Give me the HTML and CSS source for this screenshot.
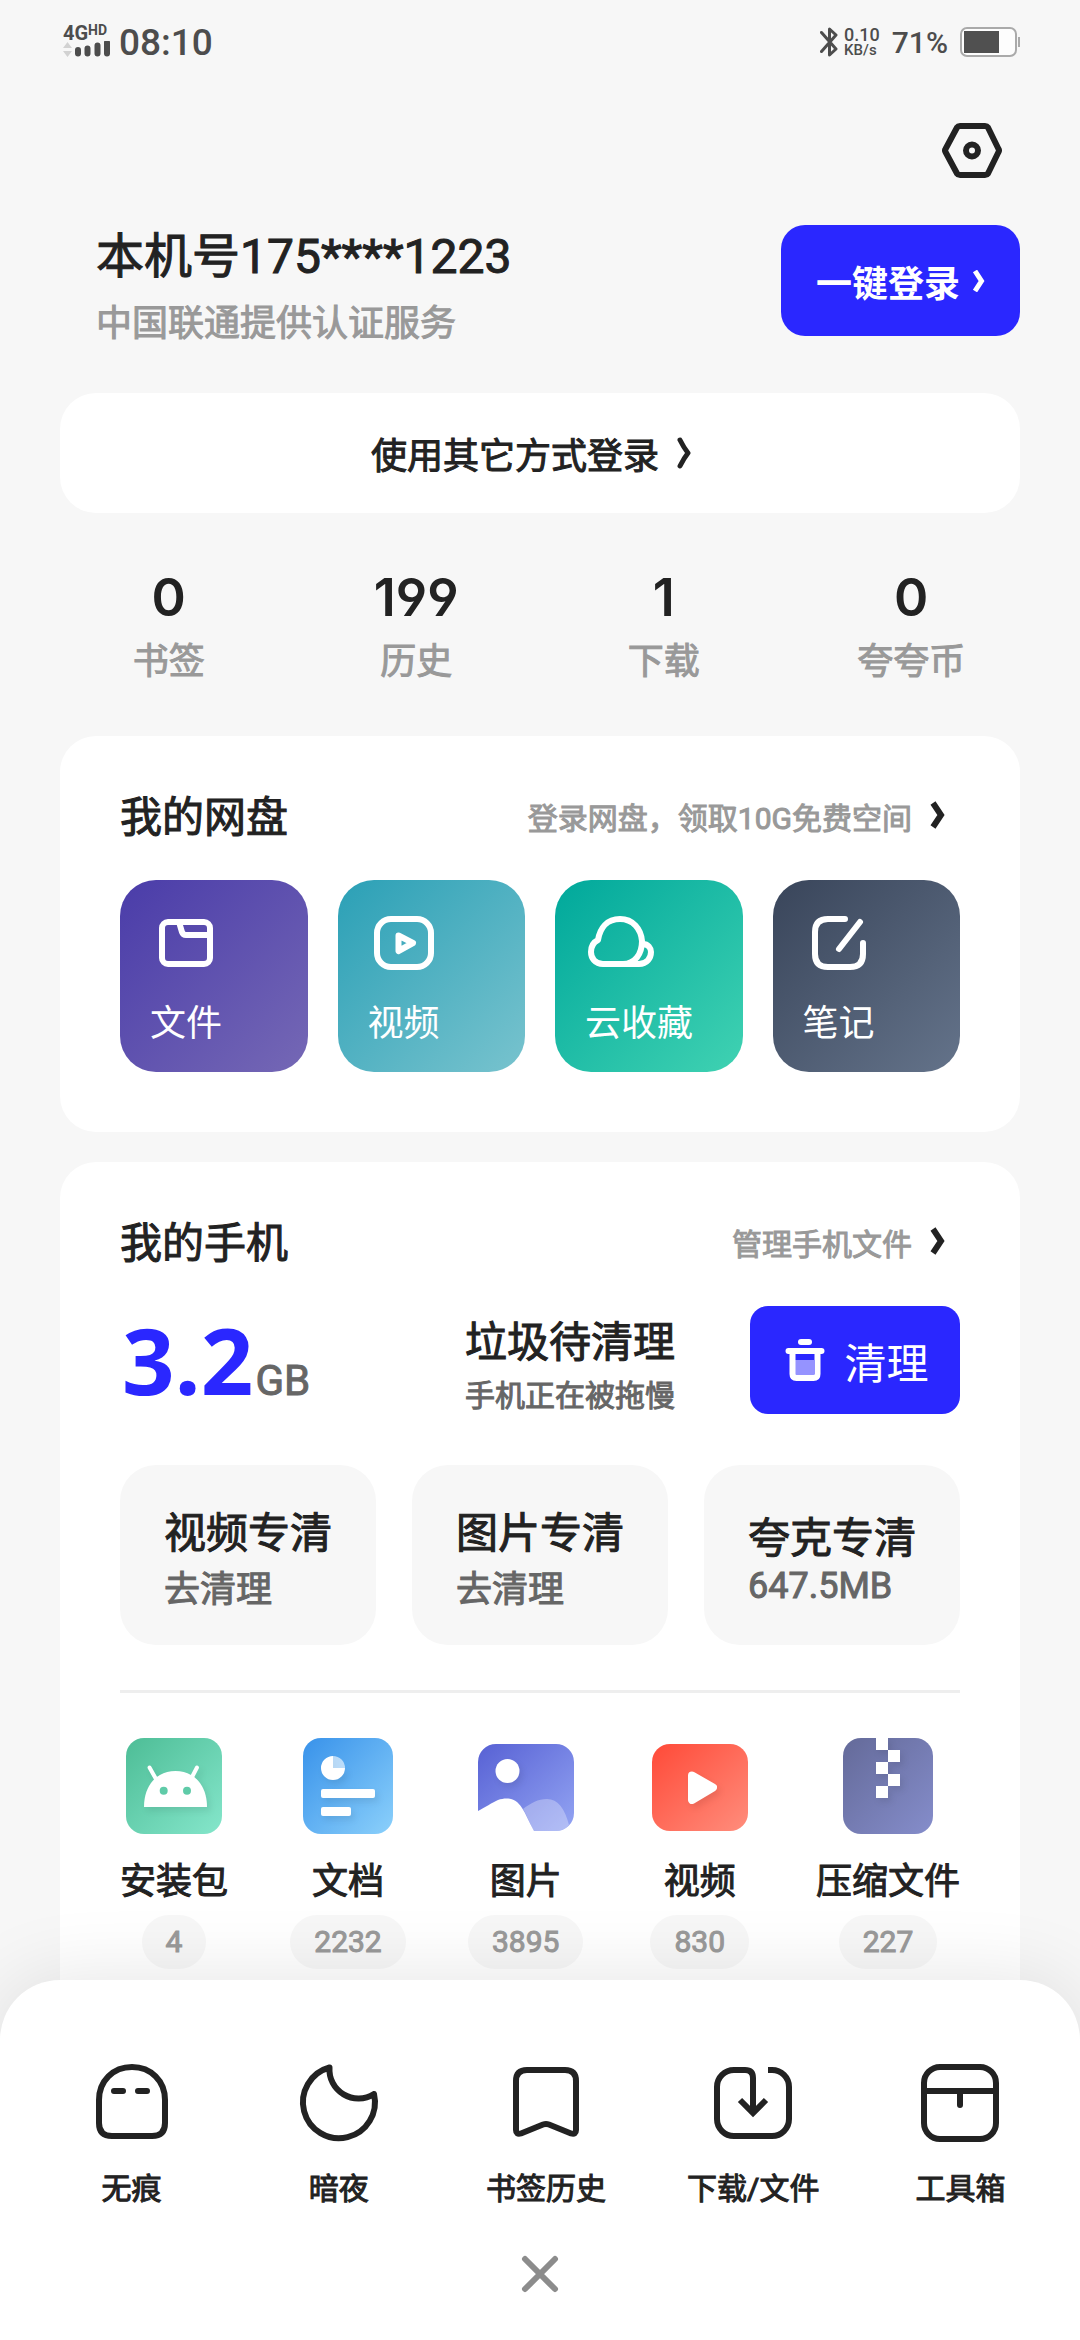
FILE: index.html
```html
<!DOCTYPE html>
<html lang="zh-CN">
<head>
<meta charset="utf-8">
<meta name="viewport" content="width=device-width, initial-scale=1">
<title>我的</title>
<link rel="stylesheet" href="styles.css">
</head>
<body>
<div class="app">
  <main class="content">
    <div class="status">
      <div class="signal">
        <div class="signal-type"><span>4G</span><span class="signal-hd">HD</span></div>
        <svg width="48" height="18" viewBox="0 0 48 18" aria-hidden="true">
          <path d="M0 7L4.500 1L9 7ZM0 10L4.500 16L9 10Z" fill="#d2d2d2"/>
          <path d="M15 9V12.500M24.500 7.500V12.500M34.500 4.500V12.500M44 1.500V12.500" stroke="#4d4d4d" stroke-width="6" stroke-linecap="round"/>
        </svg>
      </div>
      <time class="clock">08:10</time>
      <div class="status-right">
        <svg width="18" height="30" viewBox="0 0 18 30" fill="none" stroke="#4d4d4d" stroke-width="3" stroke-linecap="round" stroke-linejoin="round" aria-hidden="true">
          <path d="M1.500 5.500L16 22L9.500 28V2L16 8L1.500 24.500"/>
        </svg>
        <div class="speed"><span class="speed-value">0.10</span><span class="speed-unit">KB/s</span></div>
        <span class="percent">71%</span>
        <svg width="60" height="30" viewBox="0 0 60 30" aria-hidden="true">
          <rect x="1" y="1" width="55" height="28" rx="6" fill="#fdfdfd" stroke="#aaa" stroke-width="2"/>
          <rect x="4" y="4" width="35" height="22" fill="#505050"/>
          <rect x="58" y="10" width="2" height="10" fill="#aaa"/>
        </svg>
      </div>
    </div>

    <div class="toolbar">
      <button class="icon-button" type="button" aria-label="设置">
        <svg width="72" height="72" viewBox="0 0 72 72" fill="none" stroke="#222" stroke-width="6" stroke-linejoin="round">
          <path d="M21 12.500Q22 11 24 11H49Q51 11 52 12.500L62.500 34Q63.500 35.500 62.500 37L52 58.500Q51 60 49 60H24Q22 60 21 58.500L9.500 37Q8.500 35.500 9.500 34Z"/>
          <circle cx="36" cy="35.500" r="6"/>
        </svg>
      </button>
    </div>

    <section class="profile">
      <div class="profile-text">
        <h1 class="profile-name">本机号175****1223</h1>
        <p class="profile-note">中国联通提供认证服务</p>
      </div>
      <button class="login" type="button">
        <span>一键登录</span>
        <svg width="13" height="22" viewBox="0 0 13 22" fill="none" stroke="#fff" stroke-width="5"><path d="M3 1L9.500 11L3 21"/></svg>
      </button>
    </section>

    <button class="other-login" type="button">
      <span>使用其它方式登录</span>
      <svg width="36" height="32" viewBox="0 0 36 32" fill="none" stroke="#222" stroke-width="5" stroke-linecap="round" stroke-linejoin="round"><path d="M7 3Q11 11 15 16Q11 21 7 29"/></svg>
    </button>

    <ul class="stats">
      <li class="stat"><span class="stat-value">0</span><span class="stat-label">书签</span></li>
      <li class="stat"><span class="stat-value">199</span><span class="stat-label">历史</span></li>
      <li class="stat"><span class="stat-value">1</span><span class="stat-label">下载</span></li>
      <li class="stat"><span class="stat-value">0</span><span class="stat-label">夸夸币</span></li>
    </ul>

    <section class="card">
      <div class="card-head">
        <h2 class="card-title">我的网盘</h2>
        <a class="card-link" href="#drive">登录网盘，领取10G免费空间
          <svg class="chevron" width="16" height="28" viewBox="0 0 16 28" fill="none" stroke="#222" stroke-width="6"><path d="M3 2L11 14L3 26"/></svg>
        </a>
      </div>
      <div class="tiles">
        <button class="tile tile-file" type="button">
          <svg width="72" height="72" viewBox="0 0 72 72" fill="none" stroke="#fff" stroke-width="6"><rect x="12" y="15" width="48" height="42" rx="6"/><path d="M29 15L32 25Q33 28 36 28H60"/></svg>
          <span class="tile-label">文件</span>
        </button>
        <button class="tile tile-video" type="button">
          <svg width="72" height="72" viewBox="0 0 72 72" fill="none" stroke="#fff" stroke-width="6" stroke-linejoin="round"><rect x="9" y="12" width="54" height="48" rx="14"/><path d="M30.500 28.500L45 36L30.500 44Z"/></svg>
          <span class="tile-label">视频</span>
        </button>
        <button class="tile tile-cloud" type="button">
          <svg width="72" height="72" viewBox="0 0 72 72" fill="none" stroke="#fff" stroke-width="6" stroke-linejoin="round"><path d="M18 57C10 57 6 51 6 45C6 39 9 35 13 33C15 21 22 12 35 12C48 12 56 22 57 34C57 47 50 57 38 57ZM58 37C63 37 66 41 66 45C66 51 62 57 54 57H38"/></svg>
          <span class="tile-label">云收藏</span>
        </button>
        <button class="tile tile-note" type="button">
          <svg width="72" height="72" viewBox="0 0 72 72" fill="none" stroke="#fff" stroke-width="6" stroke-linecap="round"><path d="M42 12H25Q12 12 12 25V47Q12 60 25 60H47Q60 60 60 47V36M57 15L36 42"/></svg>
          <span class="tile-label">笔记</span>
        </button>
      </div>
    </section>

    <section class="card">
      <div class="card-head">
        <h2 class="card-title">我的手机</h2>
        <a class="card-link" href="#phone">管理手机文件
          <svg class="chevron" width="16" height="28" viewBox="0 0 16 28" fill="none" stroke="#222" stroke-width="6"><path d="M3 2L11 14L3 26"/></svg>
        </a>
      </div>
      <div class="junk">
        <p class="junk-size"><span class="junk-number">3.2</span><span class="junk-unit">GB</span></p>
        <div class="junk-text">
          <p class="junk-title">垃圾待清理</p>
          <p class="junk-note">手机正在被拖慢</p>
        </div>
        <button class="clean" type="button">
          <svg width="48" height="48" viewBox="0 0 48 48" fill="none">
            <rect x="17" y="3" width="14" height="6" rx="3" fill="#fff"/>
            <rect x="14" y="24" width="19" height="16" fill="#fff" opacity=".5"/>
            <path d="M7.500 15H40.500M11.500 15V38Q11.500 42 15.500 42H32.500Q36.500 42 36.500 38V15" stroke="#fff" stroke-width="6" stroke-linecap="round"/>
          </svg>
          <span>清理</span>
        </button>
      </div>
      <div class="cleaners">
        <button class="cleaner" type="button"><span class="cleaner-title">视频专清</span><span class="cleaner-note">去清理</span></button>
        <button class="cleaner" type="button"><span class="cleaner-title">图片专清</span><span class="cleaner-note">去清理</span></button>
        <button class="cleaner" type="button"><span class="cleaner-title">夸克专清</span><span class="cleaner-note">647.5MB</span></button>
      </div>
      <div class="files">
        <a class="file" href="#apk">
          <svg width="96" height="96" viewBox="0 0 96 96">
            <defs><linearGradient id="apk" x1="0" y1="0" x2="1" y2="1"><stop offset="0" stop-color="#4dbd96"/><stop offset="1" stop-color="#85e6cb"/></linearGradient></defs>
            <rect width="96" height="96" rx="18" fill="url(#apk)"/>
            <g class="glyph"><path d="M18 69C18 47 31 33 49.500 33S81 47 81 69Z" fill="#fff"/><path d="M23.500 29.500L30 41M71 29.500L65 41" stroke="#fff" stroke-width="4" stroke-linecap="round"/></g>
            <circle cx="37.700" cy="52.700" r="4" fill="#5fcba8"/><circle cx="61" cy="52.700" r="4" fill="#5fcba8"/>
          </svg>
          <span class="file-label">安装包</span><span class="file-count">4</span>
        </a>
        <a class="file" href="#doc">
          <svg width="90" height="96" viewBox="0 0 90 96">
            <defs><linearGradient id="doc" x1="0" y1="0" x2="1" y2="1"><stop offset="0" stop-color="#3892ea"/><stop offset="1" stop-color="#8bd0fb"/></linearGradient></defs>
            <rect width="90" height="96" rx="18" fill="url(#doc)"/>
            <g class="glyph" fill="#fff"><path d="M30 30V18A12 12 0 1 0 42 30Z"/><rect x="18" y="51" width="54" height="9" rx="2"/><rect x="18" y="69" width="30" height="9" rx="2"/></g>
            <path d="M30 30V18A12 12 0 0 1 42 30Z" fill="#fff" opacity=".6"/>
          </svg>
          <span class="file-label">文档</span><span class="file-count">2232</span>
        </a>
        <a class="file" href="#pic">
          <svg width="96" height="96" viewBox="0 0 96 96">
            <defs><linearGradient id="pic" x1="0" y1="0" x2="1" y2="1"><stop offset="0" stop-color="#5761d4"/><stop offset="1" stop-color="#93a4f3"/></linearGradient></defs>
            <path d="M18 6H78A18 18 0 0 1 96 24V75A18 18 0 0 1 78 93H56C51 84 48 76 44 70C38 60 29 59 20 62C15 64 6 70 0 73V24A18 18 0 0 1 18 6Z" fill="url(#pic)"/>
            <path d="M45 71C53 65 60 61 69 61C80 61 87 71 91 87A18 18 0 0 1 78 93H56C51 84 49 77 45 71Z" fill="#fff" opacity=".3"/>
            <circle class="glyph" cx="29.500" cy="33" r="12" fill="#fff"/>
          </svg>
          <span class="file-label">图片</span><span class="file-count">3895</span>
        </a>
        <a class="file" href="#video">
          <svg width="96" height="96" viewBox="0 0 96 96">
            <defs><linearGradient id="vid" x1="0" y1="0" x2="1" y2="1"><stop offset="0" stop-color="#ff4a38"/><stop offset="1" stop-color="#ff8d7c"/></linearGradient></defs>
            <rect y="6" width="96" height="87" rx="18" fill="url(#vid)"/>
            <path class="glyph" d="M40 37.500L61 49.500L40 62Z" fill="#fff" stroke="#fff" stroke-width="8" stroke-linejoin="round"/>
          </svg>
          <span class="file-label">视频</span><span class="file-count">830</span>
        </a>
        <a class="file" href="#zip">
          <svg width="90" height="96" viewBox="0 0 90 96">
            <defs><linearGradient id="zip" x1="0" y1="0" x2="1" y2="1"><stop offset="0" stop-color="#646a99"/><stop offset="1" stop-color="#858dcb"/></linearGradient></defs>
            <rect width="90" height="96" rx="18" fill="url(#zip)"/>
            <path class="glyph" d="M33 0H45V12H57V24H45V36H57V48H45V60H33V48H45V36H33V24H45V12H33Z" fill="#fff"/>
          </svg>
          <span class="file-label">压缩文件</span><span class="file-count">227</span>
        </a>
      </div>
    </section>
  </main>

  <nav class="sheet">
    <div class="sheet-items">
      <button class="sheet-item" type="button">
        <svg width="96" height="96" viewBox="0 0 96 96" fill="none" stroke="#222" stroke-width="6" stroke-linecap="round"><path d="M15 45C15 26 29 12 48 12S81 26 81 45V68Q81 81 68 81H28Q15 81 15 68ZM30 36H39M54 36H63"/></svg>
        <span>无痕</span>
      </button>
      <button class="sheet-item" type="button">
        <svg width="96" height="96" viewBox="0 0 96 96" fill="none" stroke="#222" stroke-width="6" stroke-linejoin="round"><path d="M38.500 12.500A36 36 0 1 0 83 39A29 29 0 0 1 38.500 12.500Z"/></svg>
        <span>暗夜</span>
      </button>
      <button class="sheet-item" type="button">
        <svg width="96" height="96" viewBox="0 0 96 96" fill="none" stroke="#222" stroke-width="6"><path d="M18 26Q18 15 29 15H67Q78 15 78 26V75Q78 80 73 78.500L51 69.500Q48 68.500 45 69.500L23 78.500Q18 80 18 75Z"/></svg>
        <span>书签历史</span>
      </button>
      <button class="sheet-item" type="button">
        <svg width="96" height="96" viewBox="0 0 96 96" fill="none" stroke="#222" stroke-width="6"><path d="M63 15H67A17 17 0 0 1 84 32V64A17 17 0 0 1 67 81H29A17 17 0 0 1 12 64V32A17 17 0 0 1 29 15H40Q48 15 48 23V58M35 45L48 58L61 45"/></svg>
        <span>下载/文件</span>
      </button>
      <button class="sheet-item" type="button">
        <svg width="96" height="96" viewBox="0 0 96 96" fill="none" stroke="#222" stroke-width="6" stroke-linecap="round"><rect x="12" y="12" width="72" height="72" rx="16"/><path d="M12 36H84M48 36V50"/></svg>
        <span>工具箱</span>
      </button>
    </div>
    <button class="icon-button close" type="button" aria-label="关闭">
      <svg width="48" height="48" viewBox="0 0 48 48" stroke="#8c8c8c" stroke-width="6" stroke-linecap="round"><path d="M9 9L39 39M39 9L9 39"/></svg>
    </button>
  </nav>
</div>
</body>
</html>
```

FILE: styles.css
```css
* {
  box-sizing: border-box;
}

body,
h1,
h2,
p,
ul {
  margin: 0;
  padding: 0;
}

/* Labels are set in the regular weight, thickened by a thin outline */
body {
  background: #f7f7f7;
  color: #222;
  font-family: Roboto, "Noto Sans CJK SC", sans-serif;
  font-weight: 400;
  -webkit-text-stroke-width: 1px;
}

button {
  margin: 0;
  padding: 0;
  border: 0;
  background: none;
  color: inherit;
  font: inherit;
}

a {
  color: inherit;
  text-decoration: none;
}

svg {
  display: block;
  flex: none;
}

.app {
  display: flex;
  flex-direction: column;
  height: 100vh;
}

.content {
  flex: 1;
  min-height: 0;
  overflow-y: auto;
  padding: 0 60px 90px;
  scrollbar-width: none;
}

/* Status bar */
.status {
  display: flex;
  align-items: center;
  height: 84px;
  padding-left: 3px;
  color: #4d4d4d;
  font-weight: 500;
  -webkit-text-stroke-width: 0;
}

.signal {
  width: 48px;
}

.signal-type {
  display: flex;
  align-items: flex-start;
  font-size: 20px;
  font-weight: 700;
  line-height: 16px;
}

.signal-hd {
  font-size: 14px;
  line-height: 11px;
}

.clock {
  flex: 1;
  margin-left: 8px;
  font-size: 37px;
}

.status-right {
  display: flex;
  align-items: center;
}

.speed {
  display: flex;
  flex-direction: column;
  margin: 0 12px 0 6px;
}

.speed-value {
  font-size: 18px;
  line-height: 17px;
}

.speed-unit {
  font-size: 15px;
  line-height: 15px;
}

.percent {
  margin-right: 12px;
  font-size: 30px;
}

.toolbar {
  display: flex;
  justify-content: flex-end;
  padding: 31px 12px 38px;
}

/* Account */
.profile {
  display: flex;
  align-items: flex-start;
  justify-content: space-between;
  margin-bottom: 45px;
}

.profile-text {
  padding: 2px 0 0 36px;
}

.profile-name {
  font-size: 48px;
  font-weight: 400;
  line-height: 60px;
}

.profile-note {
  margin-top: 13px;
  color: #999;
  font-size: 36px;
  line-height: 48px;
}

.login {
  display: flex;
  align-items: center;
  gap: 12px;
  height: 111px;
  padding: 0 35px;
  border-radius: 24px;
  background: #2a27ff;
  color: #fff;
  font-size: 36px;
  font-weight: 700;
  -webkit-text-stroke-width: 0;
}

.other-login {
  display: flex;
  align-items: center;
  justify-content: center;
  gap: 14px;
  width: 100%;
  height: 120px;
  border-radius: 36px;
  background: #fff;
  font-size: 36px;
}

.stats {
  display: grid;
  grid-template-columns: repeat(4, 1fr);
  margin: 0 -15px;
  padding: 55px 0 50px;
  list-style: none;
  text-align: center;
}

.stat {
  display: flex;
  flex-direction: column;
  gap: 10px;
}

.stat-value {
  font-family: Inter, Roboto, sans-serif;
  font-feature-settings: "cv04";
  font-size: 52px;
  font-weight: 600;
  line-height: 60px;
  -webkit-text-stroke-width: 0;
}

.stat-label {
  color: #999;
  font-size: 36px;
  line-height: 48px;
}

/* Cards */
.card {
  margin-bottom: 30px;
  padding: 52px 60px 60px;
  border-radius: 36px;
  background: #fff;
}

.card-head {
  display: flex;
  align-items: center;
  justify-content: space-between;
  margin-bottom: 32px;
}

.card-title {
  font-size: 42px;
  font-weight: 400;
  line-height: 60px;
}

.card-link {
  display: flex;
  align-items: center;
  gap: 18px;
  padding: 2px 14px 0 0;
  color: #999;
  font-size: 30px;
  line-height: 58px;
}

.chevron {
  margin-bottom: 8px;
}

.tiles {
  display: grid;
  grid-template-columns: repeat(4, 1fr);
  gap: 30px;
}

.tile {
  display: flex;
  flex-direction: column;
  align-items: flex-start;
  gap: 21px;
  padding: 27px 30px 24px;
  border-radius: 36px;
  color: #fff;
  -webkit-text-stroke-width: 0;
}

.tile-label {
  font-size: 36px;
  line-height: 48px;
}

.tile-file {
  background: linear-gradient(135deg, #4a3ca9, #7568b5);
}

.tile-video {
  background: linear-gradient(135deg, #2ba0b6, #78c3ce);
}

.tile-cloud {
  background: linear-gradient(135deg, #00a89b, #40d2b2);
}

.tile-note {
  background: linear-gradient(135deg, #39455a, #64738a);
}

/* Storage clean-up */
.junk {
  display: flex;
  align-items: flex-end;
  margin-bottom: 51px;
}

.junk-size {
  display: flex;
  flex: 1;
  align-items: baseline;
  gap: 2px;
  padding-left: 2px;
}

.junk-number {
  color: #2a27ff;
  font-family: "Open Sans", sans-serif;
  font-size: 92px;
  font-weight: 700;
  line-height: 108px;
  -webkit-text-stroke-width: 0;
}

.junk-unit {
  color: #666;
  font-size: 42px;
  line-height: 48px;
}

.junk-text {
  margin-right: 75px;
}

.junk-title {
  font-size: 42px;
  line-height: 54px;
}

.junk-note {
  margin-top: 8px;
  color: #666;
  font-size: 30px;
  line-height: 36px;
}

.clean {
  display: flex;
  align-items: center;
  justify-content: center;
  gap: 15px;
  width: 210px;
  height: 108px;
  border-radius: 18px;
  background: #2a27ff;
  color: #fff;
  font-size: 42px;
  -webkit-text-stroke-width: 0;
}

.cleaners {
  display: grid;
  grid-template-columns: repeat(3, 1fr);
  gap: 36px;
}

.cleaner {
  display: flex;
  flex-direction: column;
  align-items: flex-start;
  justify-content: center;
  height: 180px;
  padding-left: 44px;
  border-radius: 36px;
  background: #f7f7f7;
}

.cleaner-title {
  font-size: 42px;
}

.cleaner-note {
  color: #666;
  font-size: 36px;
}

.files {
  display: flex;
  justify-content: space-between;
  margin-top: 45px;
  padding-top: 45px;
  border-top: 3px solid #eee;
}

.file {
  display: flex;
  flex-direction: column;
  align-items: center;
  min-width: 108px;
}

.glyph {
  filter: drop-shadow(3px 4px 3px rgba(0, 0, 0, 0.08));
}

.file-label {
  margin: 24px 0 9px;
  font-size: 36px;
  line-height: 48px;
}

.file-count {
  padding: 0 24px;
  border-radius: 27px;
  background: #f7f7f7;
  color: #999;
  font-size: 30px;
  line-height: 54px;
}

/* Bottom sheet, its rounded top overlapping the scrolled content */
.sheet {
  z-index: 1;
  display: flex;
  flex-direction: column;
  align-items: center;
  margin-top: -60px;
  padding: 75px 16px 42px 28px;
  border-radius: 60px 60px 0 0;
  background: #fff;
  box-shadow: 0 0 80px rgba(0, 0, 0, 0.11);
}

.sheet-items {
  display: grid;
  grid-template-columns: repeat(5, 1fr);
  width: 100%;
}

.sheet-item {
  display: flex;
  flex-direction: column;
  align-items: center;
  gap: 20px;
  font-size: 30px;
  line-height: 36px;
}

.close {
  margin: 43px 12px 0 0;
}
```
